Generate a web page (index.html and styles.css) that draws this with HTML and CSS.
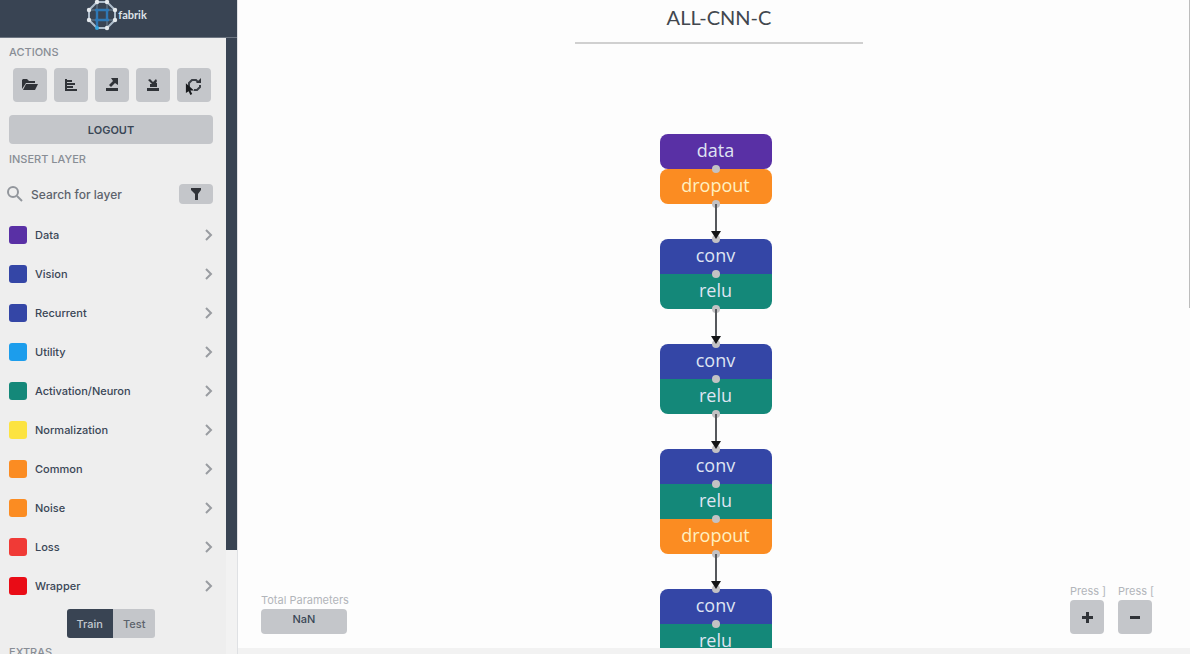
FILE: index.html
```html
<!DOCTYPE html>
<html lang="en">
<head>
<meta charset="utf-8">
<title>Fabrik</title>
<link rel="stylesheet" href="styles.css">
</head>
<body>
<div class="app">
  <aside class="sidebar">
    <header class="brand">
      <svg class="brand-mark" viewBox="0 0 32 32" aria-hidden="true">
        <path d="M11 3H21L29 11V21L21 29H11L3 21V11Z" fill="none" stroke="#aebdcb" stroke-width="2"/>
        <path d="M11 3V29M21 3V29M3 11H29M3 21H29" stroke="#71879c" stroke-width="1"/>
        <path d="M11 11H21V21H11ZM11 21V28M9 11H23M9 21H23" fill="none" stroke="#2f78b5" stroke-width="2.4"/>
        <g fill="#e4e9ed"><circle cx="11" cy="3" r="2.2"/><circle cx="21" cy="3" r="2.2"/><circle cx="29" cy="11" r="2.2"/><circle cx="29" cy="21" r="2.2"/><circle cx="21" cy="29" r="2.2"/><circle cx="3" cy="21" r="2.2"/><circle cx="3" cy="11" r="2.2"/></g>
        <circle cx="11" cy="29" r="2" fill="#35a5df"/>
      </svg>
      <span>fabrik</span>
    </header>
    <div class="panel">
      <h2 class="heading">ACTIONS</h2>
      <div class="actions">
        <button class="btn square" aria-label="Open"><svg viewBox="0 0 18 16"><path d="M1 12V3L2 2H6L8 4H14V6H5Z"/><path d="M5 7H17L14 13H2Z"/></svg></button>
        <button class="btn square" aria-label="Layers"><svg viewBox="0 0 18 16"><path d="M3 2H5V14H3ZM5 3H10V5H5ZM5 6H13V8H5ZM5 9H11V11H5ZM5 12H15V14H5Z"/></svg></button>
        <button class="btn square" aria-label="Export"><svg viewBox="0 0 18 16"><path d="M3 11H15V14H3ZM8 1H15V8L12 6L8 10L6 8L10 4Z"/></svg></button>
        <button class="btn square" aria-label="Import"><svg viewBox="0 0 18 16"><path d="M3 11H15V14H3ZM4 3L6 2L9 5L12 2L13 4L12 6H13V10H6V7H8Z"/></svg></button>
        <button class="btn square" aria-label="Refresh"><svg viewBox="0 0 18 16"><path d="M4 10V6L7 3H11L13 5M15 8V10L12 13H9" fill="none" stroke="#3b3f45" stroke-width="2"/><path d="M11 6H16V1Z"/></svg>
          <svg class="cursor" viewBox="0 0 10 14"><path d="M1 0V11L4 9L6 13L8 12L6 8H10Z"/></svg></button>
      </div>
      <button class="btn logout">LOGOUT</button>
      <h2 class="heading">INSERT LAYER</h2>
      <div class="search">
        <svg class="lens" viewBox="0 0 16 16" aria-hidden="true"><circle cx="6" cy="6" r="5"/><path d="M10 10L15 15"/></svg>
        <input class="search-input" type="text" placeholder="Search for layer" aria-label="Search for layer">
        <button class="btn filter" aria-label="Filter"><svg viewBox="0 0 12 12"><path d="M1 0H11V2L8 6V12H5V6L1 2Z"/></svg></button>
      </div>
      <nav class="layers">
        <button class="layer"><i class="swatch data"></i><span>Data</span><svg viewBox="0 0 8 12"><path d="M1 1L6 6L1 11"/></svg></button>
        <button class="layer"><i class="swatch conv"></i><span>Vision</span><svg viewBox="0 0 8 12"><path d="M1 1L6 6L1 11"/></svg></button>
        <button class="layer"><i class="swatch conv"></i><span>Recurrent</span><svg viewBox="0 0 8 12"><path d="M1 1L6 6L1 11"/></svg></button>
        <button class="layer"><i class="swatch utility"></i><span>Utility</span><svg viewBox="0 0 8 12"><path d="M1 1L6 6L1 11"/></svg></button>
        <button class="layer"><i class="swatch relu"></i><span>Activation/Neuron</span><svg viewBox="0 0 8 12"><path d="M1 1L6 6L1 11"/></svg></button>
        <button class="layer"><i class="swatch normal"></i><span>Normalization</span><svg viewBox="0 0 8 12"><path d="M1 1L6 6L1 11"/></svg></button>
        <button class="layer"><i class="swatch dropout"></i><span>Common</span><svg viewBox="0 0 8 12"><path d="M1 1L6 6L1 11"/></svg></button>
        <button class="layer"><i class="swatch dropout"></i><span>Noise</span><svg viewBox="0 0 8 12"><path d="M1 1L6 6L1 11"/></svg></button>
        <button class="layer"><i class="swatch loss"></i><span>Loss</span><svg viewBox="0 0 8 12"><path d="M1 1L6 6L1 11"/></svg></button>
        <button class="layer"><i class="swatch wrapper"></i><span>Wrapper</span><svg viewBox="0 0 8 12"><path d="M1 1L6 6L1 11"/></svg></button>
      </nav>
      <div class="phase"><button class="phase-btn active">Train</button><button class="phase-btn">Test</button></div>
      <h2 class="heading">EXTRAS</h2>
    </div>
    <div class="rail"></div>
  </aside>
  <main class="main">
    <section class="canvas">
      <header class="title-bar"><input class="title" type="text" value="ALL-CNN-C" aria-label="Model name"></header>
      <div class="graph">
        <div class="group split"><div class="node data">data</div><div class="node dropout">dropout</div></div>
        <svg class="edge" viewBox="0 0 12 35"><path d="M6 0V30" stroke="#55585c" stroke-width="2"/><path d="M1 27H11L6 35Z" fill="#141517"/></svg>
        <div class="group"><div class="node conv">conv</div><div class="node relu">relu</div></div>
        <svg class="edge" viewBox="0 0 12 35"><path d="M6 0V30" stroke="#55585c" stroke-width="2"/><path d="M1 27H11L6 35Z" fill="#141517"/></svg>
        <div class="group"><div class="node conv">conv</div><div class="node relu">relu</div></div>
        <svg class="edge" viewBox="0 0 12 35"><path d="M6 0V30" stroke="#55585c" stroke-width="2"/><path d="M1 27H11L6 35Z" fill="#141517"/></svg>
        <div class="group"><div class="node conv">conv</div><div class="node relu">relu</div><div class="node dropout">dropout</div></div>
        <svg class="edge" viewBox="0 0 12 35"><path d="M6 0V30" stroke="#55585c" stroke-width="2"/><path d="M1 27H11L6 35Z" fill="#141517"/></svg>
        <div class="group"><div class="node conv">conv</div><div class="node relu">relu</div></div>
      </div>
      <div class="params"><span class="hint">Total Parameters</span><output class="total">NaN</output></div>
      <div class="zoom">
        <div class="zoom-item"><label class="hint" for="zoom-in">Press ]</label><button class="btn square" id="zoom-in"><svg viewBox="0 0 18 16"><path d="M8 3H11V7H15V10H11V14H8V10H4V7H8Z"/></svg></button></div>
        <div class="zoom-item"><label class="hint" for="zoom-out">Press [</label><button class="btn square" id="zoom-out"><svg viewBox="0 0 18 16"><path d="M4 7H14V10H4Z"/></svg></button></div>
      </div>
      <div class="scroll-thumb"></div>
    </section>
  </main>
</div>
</body>
</html>
```
FILE: styles.css
```css
* { box-sizing: border-box; }
body { margin: 0; overflow: hidden; background: #f2f2f2; font-family: Inter, "Liberation Sans", sans-serif; color: #3a4656; }
button, input { font: inherit; color: inherit; border: 0; padding: 0; margin: 0; }
svg { display: block; flex: none; }

.app { display: flex; height: 100vh; overflow: hidden; }

.sidebar { display: grid; grid-template-columns: minmax(0, 1fr) 11px; grid-template-rows: 38px 1fr; width: 238px; flex: none; overflow: hidden; border-right: 1px solid #dfe1e4; background: #f2f2f2; }
.brand { grid-column: 1 / -1; display: flex; align-items: center; justify-content: center; padding: 0 4px 7px 0; background: #394453; border-bottom: 1px solid #6d7682; color: #dde2e7; font: 700 11px/16px Lato, sans-serif; }
.brand-mark { width: 32px; height: 32px; }
.panel { min-height: 0; background: #eeeeee; padding: 0 13px 0 9px; }
.rail { height: 512px; background: #394453; }

.heading { margin: 0; font-size: 11px; line-height: 16px; font-weight: 500; color: #888d95; }
.panel > .heading:first-child { padding: 6px 0 8px; }
.actions { display: flex; gap: 7px; padding-left: 4px; margin-bottom: 13px; }
.btn { display: flex; align-items: center; justify-content: center; background: #c4c6ca; border-radius: 4px; }
.btn svg { fill: #303338; }
.square { width: 34px; height: 34px; position: relative; flex: none; }
.square > svg { width: 18px; height: 16px; }
.square > .cursor { position: absolute; left: 8px; top: 15px; width: 9px; height: 13px; fill: #17191c; }
.logout { width: 100%; height: 29px; margin-bottom: 7px; font-size: 11px; font-weight: 600; }

.search { display: flex; align-items: center; height: 20px; margin: 17px 0 11px; gap: 8px; }
.lens { width: 16px; height: 16px; margin-left: -2px; fill: none; stroke: #92969c; stroke-width: 2; }
.search-input { flex: 1; min-width: 0; height: 20px; background: none; font-size: 12px; font-weight: 500; outline: 0; }
.search-input::placeholder { color: #5d636c; opacity: 1; }
.filter { width: 34px; height: 20px; }
.filter svg { width: 12px; height: 12px; }

.layers { display: flex; flex-direction: column; }
.layer { display: flex; align-items: center; height: 39px; gap: 8px; background: none; font-size: 11px; font-weight: 500; text-align: left; }
.layer span { flex: 1; }
.layer svg { width: 8px; height: 12px; fill: none; stroke: #999ca1; stroke-width: 2; }
.swatch { width: 18px; height: 18px; border-radius: 3px; }

.data { background: #5930a5; }
.conv { background: #3446a6; }
.relu { background: #148879; }
.dropout { background: #fb8c22; }
.utility { background: #1c9dec; }
.normal { background: #fce341; }
.loss { background: #f03a36; }
.wrapper { background: #e90c16; }

.phase { display: flex; justify-content: center; margin: 4px 0 6px; }
.phase-btn { height: 29px; padding: 0 10px; background: #c4c6ca; color: #5d636c; border-radius: 0 3px 3px 0; font-size: 11px; font-weight: 500; }
.phase-btn.active { background: #394453; color: #c4c9d0; border-radius: 3px 0 0 3px; }

.main { flex: 1; min-width: 0; padding-bottom: 6px; }
.canvas { position: relative; height: 100%; overflow: hidden; background: #fdfdfd; }
.title-bar { display: flex; justify-content: center; padding-left: 10px; }
.title { width: 288px; height: 44px; padding-bottom: 8px; background: none; border-bottom: 2px solid #d0d0d0; text-align: center; font: 400 20px/24px Lato, sans-serif; color: #42474e; outline: 0; }
.graph { display: flex; flex-direction: column; align-items: center; padding: 90px 0 0 3px; }
.group { width: 112px; flex: none; border-radius: 8px; }
.node { position: relative; height: 35px; color: #dfe4f2; text-align: center; font: 400 18px/33px "Open Sans", sans-serif; }
.node.dropout { color: #fff0c0; }
.node:first-child { border-radius: 8px 8px 0 0; }
.node:last-child { border-radius: 0 0 8px 8px; }
.split .node { border-radius: 8px; }
.node::after, .group:not(:first-child) .node:first-child::before { content: ""; position: absolute; z-index: 1; left: 52px; width: 8px; height: 8px; border-radius: 50%; background: #c3c2c4; }
.node::after { bottom: -4px; }
.group:not(:first-child) .node:first-child::before { top: -4px; }
.edge { position: relative; z-index: 2; width: 12px; height: 35px; }

.hint { font-size: 11px; line-height: 16px; color: #b2b5ba; white-space: nowrap; }
.params { position: absolute; left: 23px; bottom: 14px; display: flex; flex-direction: column; gap: 1px; }
.total { width: 86px; height: 25px; border-radius: 4px; background: #c4c6ca; font-size: 11px; font-weight: 500; line-height: 20px; text-align: center; }
.zoom { position: absolute; right: 38px; bottom: 14px; display: flex; gap: 14px; }
.zoom-item { display: flex; flex-direction: column; width: 34px; gap: 1px; }
.scroll-thumb { position: absolute; right: 0; top: 0; width: 1px; height: 308px; background: #bdbdbd; }
```
